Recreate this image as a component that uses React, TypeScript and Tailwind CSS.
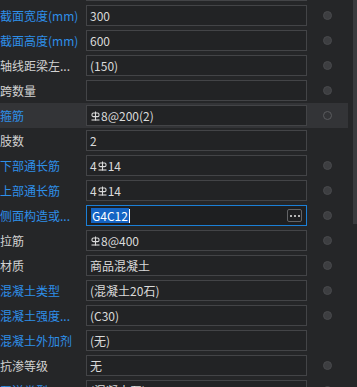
import React from 'react';

type Row = {
    label: string
    value: React.ReactNode
    blue?: boolean
    dot?: 'fill' | 'ring' | 'none'
    active?: boolean
    focused?: boolean
}

// HRB400 steel grade mark
function Grade() {
    return (
        <svg width="9" height="10" viewBox="0 0 9 10" className="inline-block align-[3px] mx-[1px]" fill="none" stroke="currentColor" strokeWidth="1.1">
            <path d="M4.5 0.5V9.5" />
            <rect x="1" y="2" width="7" height="3.6" rx="1.4" />
            <path d="M0.5 9H8.5" />
        </svg>
    )
}

const rows: Row[] = [
    { label: '', value: '', dot: 'none' },
    { label: '截面宽度(mm)', value: '300', blue: true, dot: 'fill' },
    { label: '截面高度(mm)', value: '600', blue: true, dot: 'fill' },
    { label: '轴线距梁左...', value: '(150)', dot: 'fill' },
    { label: '跨数量', value: '', dot: 'fill' },
    { label: '箍筋', value: <><Grade />8@200(2)</>, blue: true, dot: 'ring', active: true },
    { label: '肢数', value: '2', dot: 'none' },
    { label: '下部通长筋', value: <>4<Grade />14</>, blue: true, dot: 'fill' },
    { label: '上部通长筋', value: <>4<Grade />14</>, blue: true, dot: 'fill' },
    { label: '侧面构造或...', value: 'G4C12', blue: true, dot: 'fill', focused: true },
    { label: '拉筋', value: <><Grade />8@400</>, dot: 'fill' },
    { label: '材质', value: '商品混凝土', dot: 'fill' },
    { label: '混凝土类型', value: '(混凝土20石)', blue: true, dot: 'fill' },
    { label: '混凝土强度...', value: '(C30)', blue: true, dot: 'fill' },
    { label: '混凝土外加剂', value: '(无)', blue: true, dot: 'none' },
    { label: '抗渗等级', value: '无', dot: 'fill' },
    { label: '泵送类型', value: '(混凝土泵)', blue: true, dot: 'fill' },
]

function PropRow({ row }: { row: Row }) {
    return (
        <div className={`flex h-[25px] items-center ${row.active ? 'bg-[#333437]' : ''}`}>
            <div className={`w-[86px] shrink-0 whitespace-nowrap overflow-hidden ${row.blue ? 'text-[#2e8fe8]' : 'text-[#d2d2d2]'}`}>
                {row.label}
            </div>
            {row.focused ? (
                <div className="w-[221px] h-[21px] shrink-0 flex items-center justify-between border border-[#1b7fd6] bg-[#1e1f21] pl-[4px] pr-[4px]">
                    <div className="flex items-center">
                        <span className="bg-[#1464c4] text-white leading-[15px] px-[1px]">{row.value}</span>
                        <span className="w-[1px] h-[14px] bg-white"></span>
                    </div>
                    <div className="w-[15px] h-[13px] border border-[#626366] rounded-[2px] flex items-center justify-center gap-[2px]">
                        <span className="w-[2px] h-[2px] bg-[#b4b4b4]"></span>
                        <span className="w-[2px] h-[2px] bg-[#b4b4b4]"></span>
                        <span className="w-[2px] h-[2px] bg-[#b4b4b4]"></span>
                    </div>
                </div>
            ) : (
                <div className="w-[221px] h-[21px] shrink-0 flex items-center border border-[#434447] bg-[#222325] pl-[3px] text-[#dadada] whitespace-nowrap overflow-hidden">
                    {row.value}
                </div>
            )}
            <div className="flex-1 flex items-center justify-center">
                {row.dot === 'fill' && <span className="w-[9px] h-[9px] rounded-full bg-[#3d3e41] border border-[#48494c]"></span>}
                {row.dot === 'ring' && <span className="w-[9px] h-[9px] rounded-full border border-[#5a5b5e]"></span>}
            </div>
        </div>
    )
}

export default function App() {
    return (
        <div className="w-[357px] h-[387px] overflow-hidden bg-[#252628] flex text-[12px]" style={{ fontFamily: '"Noto Sans CJK SC", "Noto Sans", sans-serif' }}>
            <div className="w-[348px] shrink-0 -mt-[22px]">
                {rows.map((row, i) => <PropRow key={i} row={row} />)}
            </div>
            <div className="w-[9px] flex justify-end">
                <div className="w-[4px] h-[224px] bg-[#3a3b3e]"></div>
            </div>
        </div>
    )
}
